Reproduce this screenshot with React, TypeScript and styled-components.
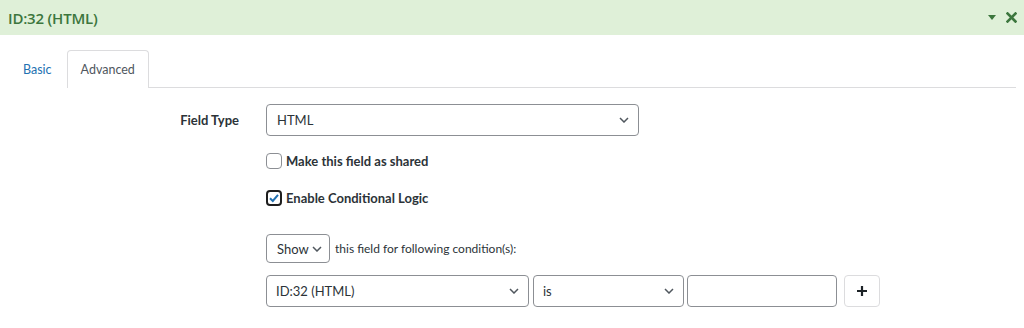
import React from "react";
import styled, { createGlobalStyle } from "styled-components";

const Global = createGlobalStyle`
  html, body { margin: 0; padding: 0; background: #fff; }
  body { font-family: Lato, "Open Sans", sans-serif; color: #2c3338; font-size: 13px; }
  * { box-sizing: border-box; }
`;

const Header = styled.div`
  height: 35px;
  background: #dff0d8;
  display: flex;
  align-items: center;
  justify-content: space-between;
  padding: 0 7px 0 8px;
`;

const Title = styled.div`
  color: #3c763d;
  font-family: "Open Sans", sans-serif;
  font-size: 15px;
  font-weight: 600;
  letter-spacing: -0.2px;
`;

const HeaderIcons = styled.div`
  display: flex;
  align-items: center;
  gap: 10px;
  color: #3c763d;
`;

const Body = styled.div`
  padding: 15px 8px 0 8px;
`;

const TabBar = styled.div`
  display: flex;
  align-items: flex-end;
  border-bottom: 1px solid #dcdcde;
  height: 38px;
`;

const Tab = styled.div<{ $active?: boolean }>`
  height: ${(p) => (p.$active ? "38px" : "37px")};
  padding: 0 ${(p) => (p.$active ? "13px" : "14px")};
  display: flex;
  align-items: center;
  font-size: 12.5px;
  color: ${(p) => (p.$active ? "#50575e" : "#2271b1")};
  background: #fff;
  border: 1px solid ${(p) => (p.$active ? "#dcdcde" : "transparent")};
  border-bottom: none;
  border-radius: 4px 4px 0 0;
  margin-bottom: -1px;
  padding-bottom: 1px;
`;

const Form = styled.div`
  display: grid;
  grid-template-columns: 258px 1fr;
  padding-top: 16px;
`;

const Label = styled.div`
  font-weight: 700;
  font-size: 13px;
  justify-self: end;
  margin-right: 27px;
  height: 32px;
  display: flex;
  align-items: center;
`;

const Field = styled.div`
  grid-column: 2;
  display: flex;
  flex-direction: column;
`;

const Select = styled.div<{ $w: number; $h?: number; $pl?: number; $pr?: number }>`
  width: ${(p) => p.$w}px;
  height: ${(p) => p.$h ?? 32}px;
  border: 1px solid #8c8f94;
  border-radius: 4px;
  display: flex;
  align-items: center;
  justify-content: space-between;
  padding: 0 ${(p) => p.$pr ?? 9}px 0 ${(p) => p.$pl ?? 9}px;
  font-size: 13px;
  color: #2c3338;
  background: #fff;
  flex-shrink: 0;
`;

const Input = styled.div<{ $w: number }>`
  width: ${(p) => p.$w}px;
  height: 32px;
  border: 1px solid #8c8f94;
  border-radius: 4px;
  background: #fff;
  flex-shrink: 0;
`;

const CheckRow = styled.div<{ $mt: number }>`
  display: flex;
  align-items: center;
  gap: 4px;
  margin-top: ${(p) => p.$mt}px;
  font-weight: 700;
  font-size: 13px;
`;

const Box = styled.div<{ $checked?: boolean }>`
  width: 16px;
  height: 16px;
  border-radius: 4px;
  border: ${(p) => (p.$checked ? "2px solid #1e1e1e" : "1px solid #8c8f94")};
  display: flex;
  align-items: center;
  justify-content: center;
`;

const InlineRow = styled.div<{ $mt: number }>`
  display: flex;
  align-items: center;
  gap: 5px;
  margin-top: ${(p) => p.$mt}px;
  font-size: 12px;
`;

const ShowText = styled.span`
  font-size: 13px;
`;

const CondRow = styled.div`
  display: flex;
  align-items: center;
  margin-top: 12px;
`;

const Gap = styled.div<{ $w: number }>`
  width: ${(p) => p.$w}px;
  flex-shrink: 0;
`;

const PlusButton = styled.div`
  width: 36px;
  height: 32px;
  border: 1px solid #dcdcde;
  border-radius: 4px;
  display: flex;
  align-items: center;
  justify-content: center;
  background: #fff;
`;

const Chevron = () => (
  <svg width="10" height="6" viewBox="0 0 10 6">
    <path d="M1 1 L5 5 L9 1" fill="none" stroke="#50575e" strokeWidth="1.5" />
  </svg>
);

export default function App() {
  return (
    <>
      <Global />
      <Header>
        <Title>ID:32 (HTML)</Title>
        <HeaderIcons>
          <svg width="8" height="5" viewBox="0 0 8 5">
            <path d="M0 0 L8 0 L4 5 Z" fill="#3c763d" />
          </svg>
          <svg width="11" height="11" viewBox="0 0 11 11">
            <path d="M1.5 1.5 L9.5 9.5 M9.5 1.5 L1.5 9.5" stroke="#3c763d" strokeWidth="2.6" strokeLinecap="square" />
          </svg>
        </HeaderIcons>
      </Header>
      <Body>
        <TabBar>
          <Tab>Basic</Tab>
          <Tab $active>Advanced</Tab>
        </TabBar>
        <Form>
          <Label>Field Type</Label>
          <Field>
            <Select $w={373} $pl={10}>
              <span>HTML</span>
              <Chevron />
            </Select>
            <CheckRow $mt={17}>
              <Box />
              <span>Make this field as shared</span>
            </CheckRow>
            <CheckRow $mt={21}>
              <Box $checked>
                <svg width="12" height="12" viewBox="0 0 12 12">
                  <path d="M2 6.3 L4.8 9 L10 2.8" fill="none" stroke="#2271b1" strokeWidth="2" />
                </svg>
              </Box>
              <span>Enable Conditional Logic</span>
            </CheckRow>
            <InlineRow $mt={28}>
              <Select $w={64} $h={29} $pl={10} $pr={7}>
                <ShowText>Show</ShowText>
                <Chevron />
              </Select>
              <span>this field for following condition(s):</span>
            </InlineRow>
            <CondRow>
              <Select $w={263}>
                <span>ID:32 (HTML)</span>
                <Chevron />
              </Select>
              <Gap $w={4} />
              <Select $w={151}>
                <span>is</span>
                <Chevron />
              </Select>
              <Gap $w={3} />
              <Input $w={150} />
              <Gap $w={7} />
              <PlusButton>
                <svg width="12" height="12" viewBox="0 0 12 12">
                  <path d="M6 1 V11 M1 6 H11" stroke="#1d2327" strokeWidth="2.2" />
                </svg>
              </PlusButton>
            </CondRow>
          </Field>
        </Form>
      </Body>
    </>
  );
}
